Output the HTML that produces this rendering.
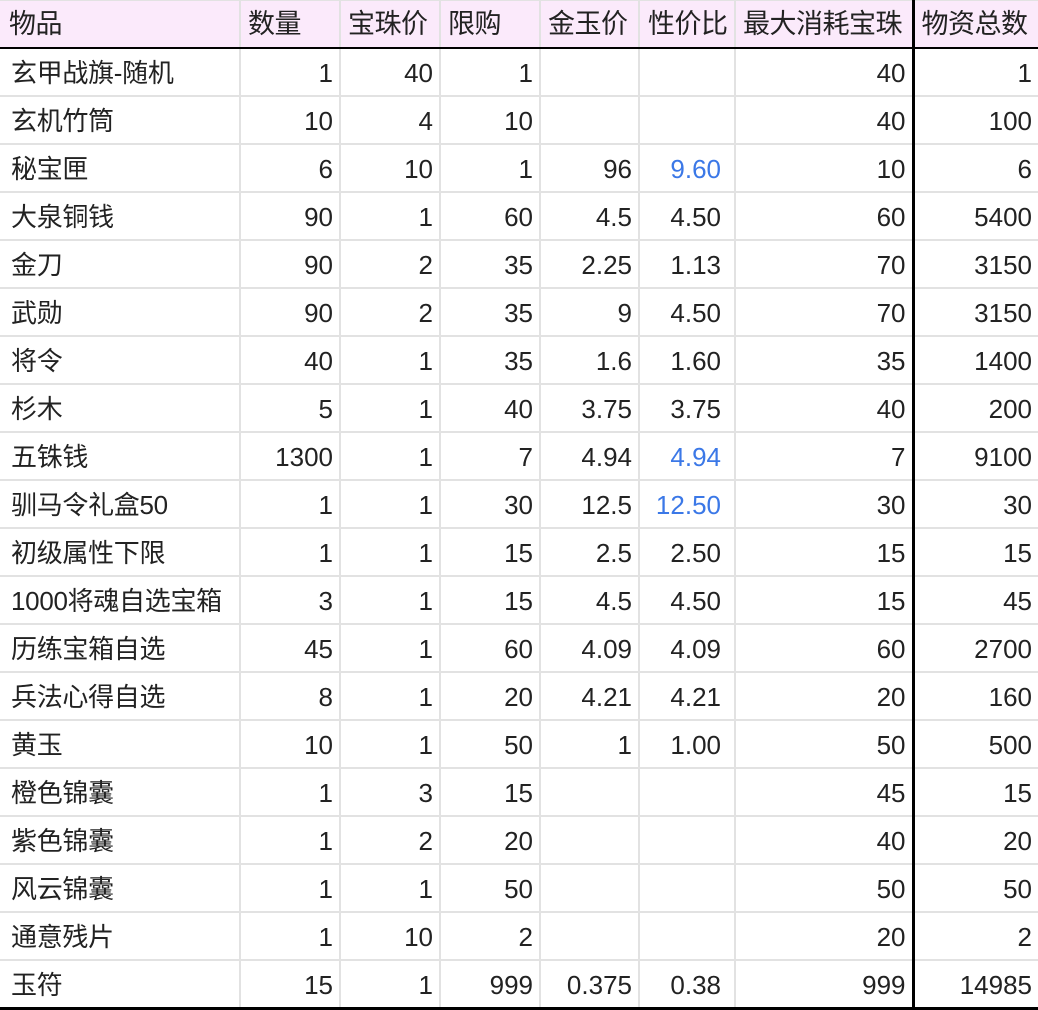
<!DOCTYPE html>
<html><head><meta charset="utf-8"><style>
body{margin:0;background:#fff;width:1038px;height:1010px;overflow:hidden}
table{border-collapse:collapse;table-layout:fixed;width:1040px;font-family:"Liberation Sans","Noto Sans CJK SC",sans-serif;font-size:26px;color:#222;position:absolute;left:-2px;top:-1px}
td{height:46px;border:2px solid #e2e2e2;padding:2px 6px 0 8px;text-align:right;white-space:nowrap;overflow:hidden;line-height:44px;box-sizing:border-box}
tr{height:48px}
td:first-child{text-align:left;padding-left:11px;letter-spacing:-0.3px}
tr:first-child td{background:#fbeafb;text-align:left;padding-left:7px;border-bottom:2px solid #000;font-size:27px;letter-spacing:-0.5px;padding-top:0}
tr:first-child td:first-child{padding-left:9px}
tr:last-child td{border-bottom:3px solid #000}
td:nth-child(7){border-right:3px solid #000}
td:nth-child(6){padding-right:13px}
.b{color:#3b78e7}
</style></head><body>
<table>
<colgroup><col style="width:241px"><col style="width:100px"><col style="width:100px"><col style="width:100px"><col style="width:99px"><col style="width:96px"><col style="width:178px"><col style="width:126px"></colgroup>
<tr><td>物品</td><td>数量</td><td>宝珠价</td><td>限购</td><td>金玉价</td><td style="padding-left:8px;text-align:left">性价比</td><td>最大消耗宝珠</td><td>物资总数</td></tr>
<tr><td>玄甲战旗-随机</td><td>1</td><td>40</td><td>1</td><td></td><td></td><td>40</td><td>1</td></tr>
<tr><td>玄机竹筒</td><td>10</td><td>4</td><td>10</td><td></td><td></td><td>40</td><td>100</td></tr>
<tr><td>秘宝匣</td><td>6</td><td>10</td><td>1</td><td>96</td><td class="b">9.60</td><td>10</td><td>6</td></tr>
<tr><td>大泉铜钱</td><td>90</td><td>1</td><td>60</td><td>4.5</td><td>4.50</td><td>60</td><td>5400</td></tr>
<tr><td>金刀</td><td>90</td><td>2</td><td>35</td><td>2.25</td><td>1.13</td><td>70</td><td>3150</td></tr>
<tr><td>武勋</td><td>90</td><td>2</td><td>35</td><td>9</td><td>4.50</td><td>70</td><td>3150</td></tr>
<tr><td>将令</td><td>40</td><td>1</td><td>35</td><td>1.6</td><td>1.60</td><td>35</td><td>1400</td></tr>
<tr><td>杉木</td><td>5</td><td>1</td><td>40</td><td>3.75</td><td>3.75</td><td>40</td><td>200</td></tr>
<tr><td>五铢钱</td><td>1300</td><td>1</td><td>7</td><td>4.94</td><td class="b">4.94</td><td>7</td><td>9100</td></tr>
<tr><td>驯马令礼盒50</td><td>1</td><td>1</td><td>30</td><td>12.5</td><td class="b">12.50</td><td>30</td><td>30</td></tr>
<tr><td>初级属性下限</td><td>1</td><td>1</td><td>15</td><td>2.5</td><td>2.50</td><td>15</td><td>15</td></tr>
<tr><td>1000将魂自选宝箱</td><td>3</td><td>1</td><td>15</td><td>4.5</td><td>4.50</td><td>15</td><td>45</td></tr>
<tr><td>历练宝箱自选</td><td>45</td><td>1</td><td>60</td><td>4.09</td><td>4.09</td><td>60</td><td>2700</td></tr>
<tr><td>兵法心得自选</td><td>8</td><td>1</td><td>20</td><td>4.21</td><td>4.21</td><td>20</td><td>160</td></tr>
<tr><td>黄玉</td><td>10</td><td>1</td><td>50</td><td>1</td><td>1.00</td><td>50</td><td>500</td></tr>
<tr><td>橙色锦囊</td><td>1</td><td>3</td><td>15</td><td></td><td></td><td>45</td><td>15</td></tr>
<tr><td>紫色锦囊</td><td>1</td><td>2</td><td>20</td><td></td><td></td><td>40</td><td>20</td></tr>
<tr><td>风云锦囊</td><td>1</td><td>1</td><td>50</td><td></td><td></td><td>50</td><td>50</td></tr>
<tr><td>通意残片</td><td>1</td><td>10</td><td>2</td><td></td><td></td><td>20</td><td>2</td></tr>
<tr><td>玉符</td><td>15</td><td>1</td><td>999</td><td>0.375</td><td>0.38</td><td>999</td><td>14985</td></tr>
</table>
</body></html>
